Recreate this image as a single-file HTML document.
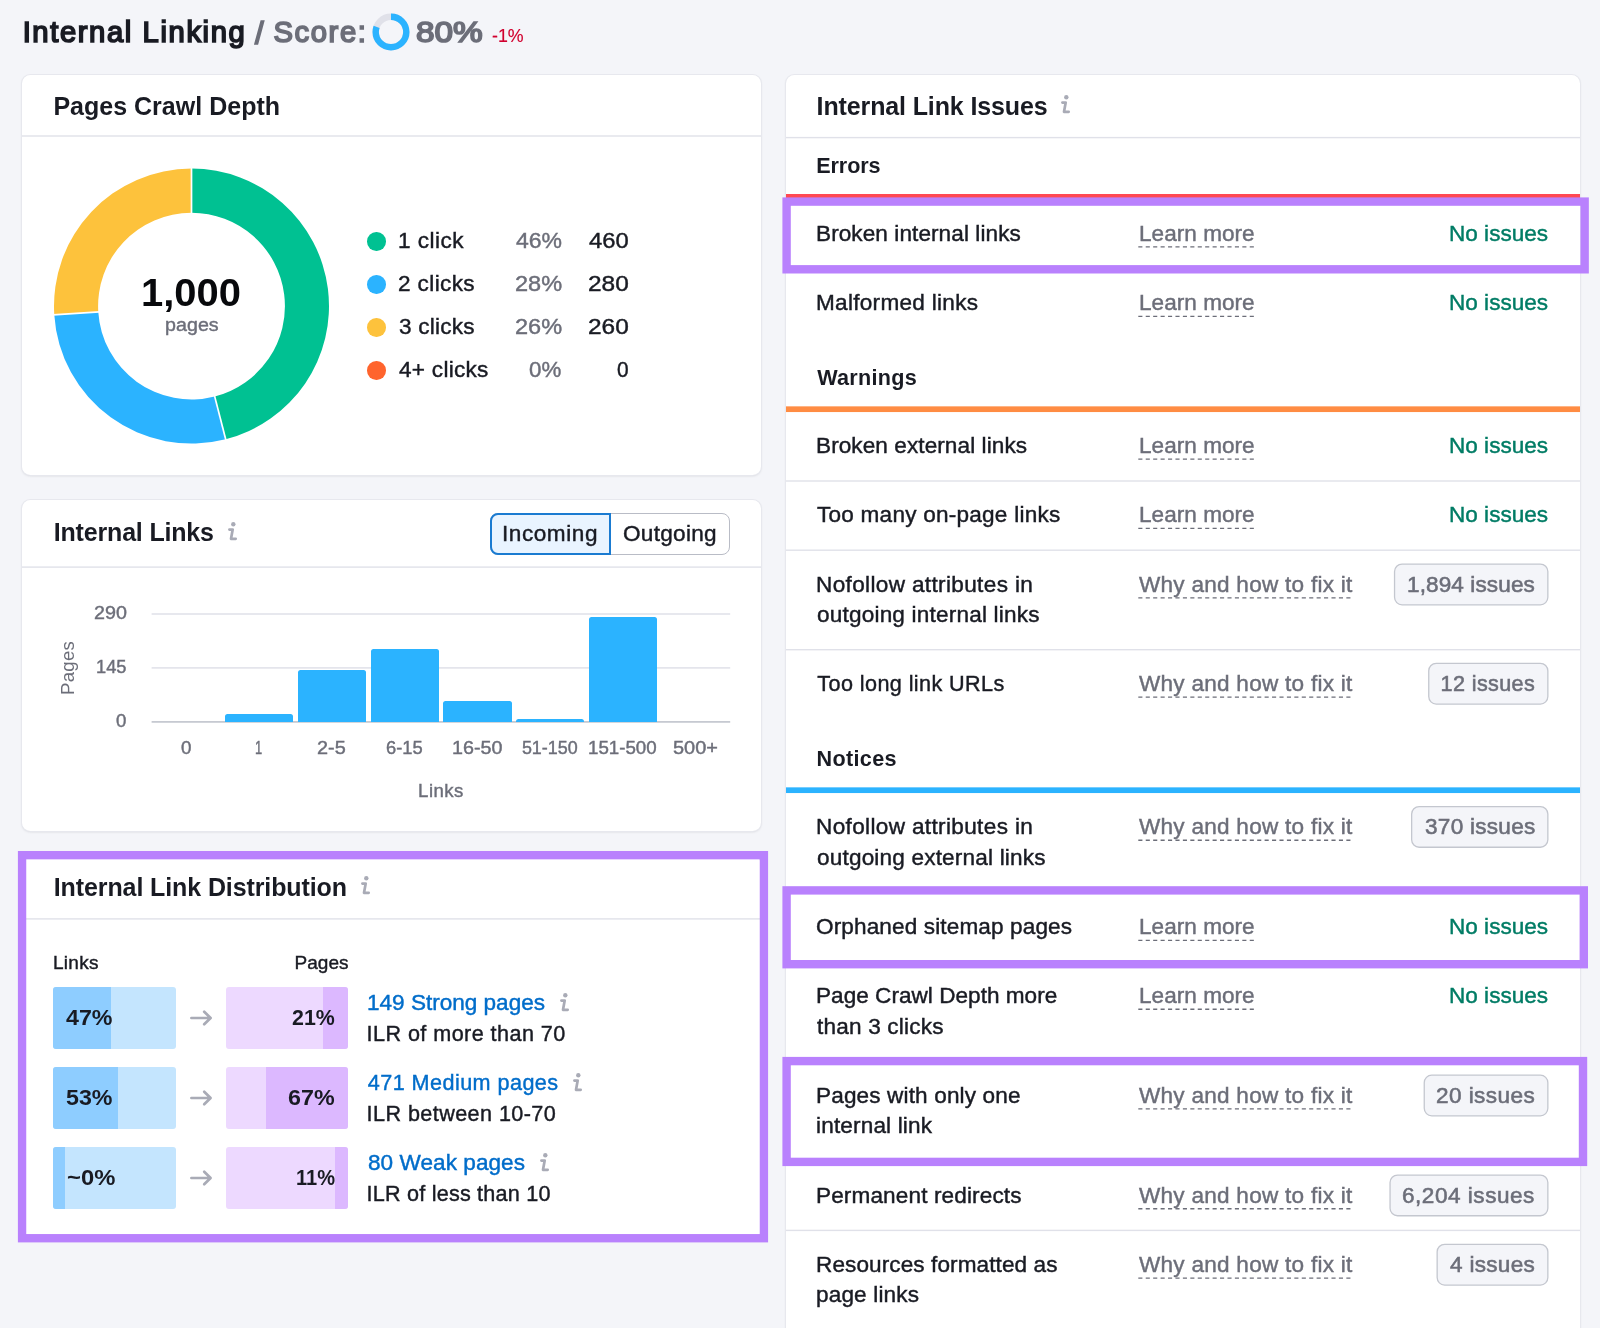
<!DOCTYPE html>
<html lang="en"><head><meta charset="utf-8"><title>Internal Linking</title>
<style>
html,body{margin:0;padding:0;background:#f4f5f9}
body{width:1600px;height:1328px;position:relative}
#page{position:absolute;left:0;top:0;width:1600px;height:1328px;overflow:hidden;background:#f4f5f9;font-family:"Liberation Sans",sans-serif;color:#191b23}
.t{position:absolute;white-space:nowrap;line-height:1;font-weight:400}
.txt{position:absolute;left:0;top:0;width:1600px;height:1328px;will-change:transform}
.r{-webkit-text-stroke:0.42px}
.abs{position:absolute}
.card{position:absolute;background:#fff;border-radius:8.5px;box-shadow:0 0 0 1px #e7e8ee,0 1px 2.5px rgba(25,27,35,.15)}
.bar{position:absolute;background:#2bb3ff;border-radius:2.5px 2.5px 0 0}
.db{position:absolute;height:61.3px;border-radius:3px;overflow:hidden}
.db i{position:absolute;top:0;bottom:0;display:block}
</style></head><body><div id="page">

<div class="card" style="left:22px;top:75px;width:739px;height:400px"></div>
<div class="card" style="left:22px;top:500px;width:739px;height:331px"></div>
<div class="card" style="left:22px;top:856px;width:739px;height:382px"></div>
<div class="card" style="left:786px;top:75px;width:794px;height:1300px"></div>
<svg class="abs" style="left:0;top:0" width="1600" height="1328" viewBox="0 0 1600 1328"><rect x="22" y="135.30" width="739" height="1.4" fill="#e0e1e9"/><rect x="22" y="566.40" width="739" height="1.4" fill="#e0e1e9"/><rect x="26" y="918.20" width="735" height="1.4" fill="#e0e1e9"/><rect x="786" y="136.90" width="794" height="1.4" fill="#e0e1e9"/><rect x="786" y="480.30" width="794" height="1.4" fill="#e0e1e9"/><rect x="786" y="549.50" width="794" height="1.4" fill="#e0e1e9"/><rect x="786" y="649.00" width="794" height="1.4" fill="#e0e1e9"/><rect x="786" y="1229.70" width="794" height="1.4" fill="#e0e1e9"/><rect x="151.6" y="613.25" width="578.6" height="1.5" fill="#e0e1e9"/><rect x="151.6" y="667.15" width="578.6" height="1.5" fill="#e0e1e9"/><rect x="151.6" y="721.05" width="578.6" height="1.7" fill="#c4c7cf"/><rect x="786" y="194.00" width="794" height="5.7" fill="#ff4953"/><rect x="786" y="406.35" width="794" height="5.7" fill="#ff8c43"/><rect x="786" y="787.35" width="794" height="5.7" fill="#2bb3ff"/><rect x="1394.55" y="564.10" width="153.30" height="40.70" rx="7.5" fill="#f4f5f9" stroke="#c4c7cf" stroke-width="1.3"/><rect x="1428.75" y="663.35" width="119.10" height="40.70" rx="7.5" fill="#f4f5f9" stroke="#c4c7cf" stroke-width="1.3"/><rect x="1411.65" y="806.55" width="136.20" height="40.70" rx="7.5" fill="#f4f5f9" stroke="#c4c7cf" stroke-width="1.3"/><rect x="1424.25" y="1075.15" width="123.60" height="40.70" rx="7.5" fill="#f4f5f9" stroke="#c4c7cf" stroke-width="1.3"/><rect x="1390.05" y="1175.05" width="157.80" height="40.70" rx="7.5" fill="#f4f5f9" stroke="#c4c7cf" stroke-width="1.3"/><rect x="1437.15" y="1244.35" width="110.70" height="40.70" rx="7.5" fill="#f4f5f9" stroke="#c4c7cf" stroke-width="1.3"/><path d="M1138.3 246.90H1254.6" stroke="#6c6e79" stroke-width="1.4" stroke-dasharray="4.1 3.33" fill="none"/><path d="M1138.3 316.35H1254.6" stroke="#6c6e79" stroke-width="1.4" stroke-dasharray="4.1 3.33" fill="none"/><path d="M1138.3 459.10H1254.6" stroke="#6c6e79" stroke-width="1.4" stroke-dasharray="4.1 3.33" fill="none"/><path d="M1138.3 528.40H1254.6" stroke="#6c6e79" stroke-width="1.4" stroke-dasharray="4.1 3.33" fill="none"/><path d="M1138.3 597.85H1352.2" stroke="#6c6e79" stroke-width="1.4" stroke-dasharray="4.1 3.33" fill="none"/><path d="M1138.3 697.10H1352.2" stroke="#6c6e79" stroke-width="1.4" stroke-dasharray="4.1 3.33" fill="none"/><path d="M1138.3 840.30H1352.2" stroke="#6c6e79" stroke-width="1.4" stroke-dasharray="4.1 3.33" fill="none"/><path d="M1138.3 940.35H1254.6" stroke="#6c6e79" stroke-width="1.4" stroke-dasharray="4.1 3.33" fill="none"/><path d="M1138.3 1009.30H1254.6" stroke="#6c6e79" stroke-width="1.4" stroke-dasharray="4.1 3.33" fill="none"/><path d="M1138.3 1108.90H1352.2" stroke="#6c6e79" stroke-width="1.4" stroke-dasharray="4.1 3.33" fill="none"/><path d="M1138.3 1208.80H1352.2" stroke="#6c6e79" stroke-width="1.4" stroke-dasharray="4.1 3.33" fill="none"/><path d="M1138.3 1278.10H1352.2" stroke="#6c6e79" stroke-width="1.4" stroke-dasharray="4.1 3.33" fill="none"/></svg>
<svg class="abs" style="left:370.65px;top:12.2px" width="40" height="40" viewBox="0 0 40 40"><circle cx="20" cy="20" r="15.3" fill="none" stroke="#e0e1e9" stroke-width="6.4"/><circle cx="20" cy="20" r="15.3" fill="none" stroke="#2bb3ff" stroke-width="6.4" stroke-dasharray="76.91 96.13" transform="rotate(-90 20 20)"/></svg>
<svg class="abs" style="left:0;top:0" width="400" height="480" viewBox="0 0 400 480"><path d="M191.50 168.60A137.5 137.5 0 0 1 225.69 439.28L214.73 396.57A93.4 93.4 0 0 0 191.50 212.70Z" fill="#00c192"/>
<path d="M225.69 439.28A137.5 137.5 0 0 1 54.27 314.73L98.28 311.96A93.4 93.4 0 0 0 214.73 396.57Z" fill="#2bb3ff"/>
<path d="M54.27 314.73A137.5 137.5 0 0 1 191.50 168.60L191.50 212.70A93.4 93.4 0 0 0 98.28 311.96Z" fill="#fdc23c"/>
<path d="M191.50 213.70L191.50 167.60" stroke="#fff" stroke-width="1.7" fill="none"/>
<path d="M214.48 395.60L225.94 440.25" stroke="#fff" stroke-width="1.7" fill="none"/>
<path d="M99.28 311.90L53.27 314.80" stroke="#fff" stroke-width="1.7" fill="none"/></svg>
<div class="abs" style="left:367.2px;top:232.1px;width:18.6px;height:18.6px;border-radius:50%;background:#00c192"></div>
<div class="abs" style="left:367.2px;top:275.1px;width:18.6px;height:18.6px;border-radius:50%;background:#2bb3ff"></div>
<div class="abs" style="left:367.2px;top:318.1px;width:18.6px;height:18.6px;border-radius:50%;background:#fdc23c"></div>
<div class="abs" style="left:367.2px;top:361.1px;width:18.6px;height:18.6px;border-radius:50%;background:#ff642d"></div>
<svg class="abs" style="left:227.2px;top:520.8px" width="12" height="21" viewBox="-1 -1 12 21"><circle cx="5.3" cy="2.3" r="2.2" fill="#a9abb6"/><path d="M1.4 7.6H4.7L3 16.8H7.7" fill="none" stroke="#a9abb6" stroke-width="2.7" stroke-linejoin="round" stroke-linecap="round"/></svg>
<svg class="abs" style="left:359.6px;top:875.2px" width="12" height="21" viewBox="-1 -1 12 21"><circle cx="5.3" cy="2.3" r="2.2" fill="#a9abb6"/><path d="M1.4 7.6H4.7L3 16.8H7.7" fill="none" stroke="#a9abb6" stroke-width="2.7" stroke-linejoin="round" stroke-linecap="round"/></svg>
<svg class="abs" style="left:1060.3px;top:93.6px" width="12" height="21" viewBox="-1 -1 12 21"><circle cx="5.3" cy="2.3" r="2.2" fill="#a9abb6"/><path d="M1.4 7.6H4.7L3 16.8H7.7" fill="none" stroke="#a9abb6" stroke-width="2.7" stroke-linejoin="round" stroke-linecap="round"/></svg>
<svg class="abs" style="left:558.5px;top:992.4px" width="12" height="21" viewBox="-1 -1 12 21"><circle cx="5.3" cy="2.3" r="2.2" fill="#a9abb6"/><path d="M1.4 7.6H4.7L3 16.8H7.7" fill="none" stroke="#a9abb6" stroke-width="2.7" stroke-linejoin="round" stroke-linecap="round"/></svg>
<svg class="abs" style="left:572.2px;top:1072.2px" width="12" height="21" viewBox="-1 -1 12 21"><circle cx="5.3" cy="2.3" r="2.2" fill="#a9abb6"/><path d="M1.4 7.6H4.7L3 16.8H7.7" fill="none" stroke="#a9abb6" stroke-width="2.7" stroke-linejoin="round" stroke-linecap="round"/></svg>
<svg class="abs" style="left:538.5px;top:1152.2px" width="12" height="21" viewBox="-1 -1 12 21"><circle cx="5.3" cy="2.3" r="2.2" fill="#a9abb6"/><path d="M1.4 7.6H4.7L3 16.8H7.7" fill="none" stroke="#a9abb6" stroke-width="2.7" stroke-linejoin="round" stroke-linecap="round"/></svg>
<div class="abs" style="left:490px;top:513px;width:240px;height:42px;box-sizing:border-box;border:1px solid #b9bcc6;border-radius:8px;background:#fff"></div>
<div class="abs" style="left:490px;top:513px;width:121px;height:42px;box-sizing:border-box;border:2px solid #1a7bd1;border-radius:8px 0 0 8px;background:#e9f4ff"></div>
<div class="bar" style="left:225px;width:68.00px;top:713.75px;height:7.85px"></div>
<div class="bar" style="left:297.5px;width:68.25px;top:669.5px;height:52.10px"></div>
<div class="bar" style="left:370.5px;width:68.70px;top:649.25px;height:72.35px"></div>
<div class="bar" style="left:442.8px;width:68.80px;top:701.2px;height:20.40px"></div>
<div class="bar" style="left:516.4px;width:67.60px;top:719px;height:2.60px"></div>
<div class="bar" style="left:588.8px;width:68.40px;top:616.8px;height:104.80px"></div>
<div class="db" style="left:53.2px;top:987.4px;width:122.8px;background:#c4e5fe"><i style="left:0;width:57.5px;background:#8ecdff"></i></div>
<div class="db" style="left:225.6px;top:987.4px;width:122.7px;background:#edd9ff"><i style="right:0;width:25.7px;background:#dcb8ff"></i></div>
<svg class="abs" style="left:189px;top:1009.0px" width="24" height="18" viewBox="0 0 24 18"><path d="M2.4 9H20.6M15.2 2.7L21.6 9L15.2 15.3" fill="none" stroke="#a9abb6" stroke-width="2.7" stroke-linecap="round" stroke-linejoin="round"/></svg>
<div class="db" style="left:53.2px;top:1067.4px;width:122.8px;background:#c4e5fe"><i style="left:0;width:65.3px;background:#8ecdff"></i></div>
<div class="db" style="left:225.6px;top:1067.4px;width:122.7px;background:#edd9ff"><i style="right:0;width:82.3px;background:#dcb8ff"></i></div>
<svg class="abs" style="left:189px;top:1089.0px" width="24" height="18" viewBox="0 0 24 18"><path d="M2.4 9H20.6M15.2 2.7L21.6 9L15.2 15.3" fill="none" stroke="#a9abb6" stroke-width="2.7" stroke-linecap="round" stroke-linejoin="round"/></svg>
<div class="db" style="left:53.2px;top:1147.4px;width:122.8px;background:#c4e5fe"><i style="left:0;width:12.2px;background:#8ecdff"></i></div>
<div class="db" style="left:225.6px;top:1147.4px;width:122.7px;background:#edd9ff"><i style="right:0;width:13.5px;background:#dcb8ff"></i></div>
<svg class="abs" style="left:189px;top:1169.0px" width="24" height="18" viewBox="0 0 24 18"><path d="M2.4 9H20.6M15.2 2.7L21.6 9L15.2 15.3" fill="none" stroke="#a9abb6" stroke-width="2.7" stroke-linecap="round" stroke-linejoin="round"/></svg>
<div class="txt">
<div class="t" style="left:59px;top:694.80px;font-size:18.6px;letter-spacing:0.294px;color:#6c6e79;transform-origin:0 0;transform:rotate(-90deg)">Pages</div>
<div class="t" style="left:22.65px;top:18px;font-size:29.2px;letter-spacing:1.612px;font-weight:401;-webkit-text-stroke:1.7px;">Internal Linking</div>
<div class="t" style="left:254.65px;top:18px;font-size:31.8px;font-weight:401;color:#6c6e79;-webkit-text-stroke:1.7px;transform:scaleX(0.98);transform-origin:0 0;">/</div>
<div class="t" style="left:273.45px;top:18px;font-size:29.2px;letter-spacing:1.631px;font-weight:401;color:#6c6e79;-webkit-text-stroke:1.7px;">Score:</div>
<div class="t" style="left:415.96px;top:18px;font-size:29.2px;font-weight:401;color:#6c6e79;-webkit-text-stroke:1.7px;transform:scaleX(1.1414);transform-origin:0 0;">80%</div>
<div class="t r" style="left:492.10px;top:27px;font-size:18.6px;color:#d1002f;-webkit-text-stroke:0.15px;transform:scaleX(0.9560);transform-origin:0 0;">-1%</div>
<div class="t" style="left:53.40px;top:94px;font-size:25px;letter-spacing:0.011px;font-weight:700;">Pages Crawl Depth</div>
<div class="t" style="left:141.03px;top:274px;font-size:38.5px;font-weight:700;color:#08090c;transform:scaleX(1.0373);transform-origin:0 0;">1,000</div>
<div class="t r" style="left:164.56px;top:316px;font-size:18.8px;letter-spacing:0.043px;color:#6c6e79;transform:scaleX(1.0450);transform-origin:0 0;">pages</div>
<div class="t r" style="left:398.35px;top:230px;font-size:21.6px;letter-spacing:0.437px;transform:scaleX(1.0450);transform-origin:0 0;">1 click</div>
<div class="t r" style="left:515.60px;top:230px;font-size:21.6px;color:#6c6e79;transform:scaleX(1.0647);transform-origin:0 0;">46%</div>
<div class="t r" style="left:589.40px;top:230px;font-size:21.6px;transform:scaleX(1.0994);transform-origin:0 0;">460</div>
<div class="t r" style="left:398.35px;top:273px;font-size:21.6px;letter-spacing:0.363px;transform:scaleX(1.0450);transform-origin:0 0;">2 clicks</div>
<div class="t r" style="left:514.51px;top:273px;font-size:21.6px;color:#6c6e79;transform:scaleX(1.0900);transform-origin:0 0;">28%</div>
<div class="t r" style="left:588.27px;top:273px;font-size:21.6px;transform:scaleX(1.1308);transform-origin:0 0;">280</div>
<div class="t r" style="left:399.40px;top:316px;font-size:21.6px;letter-spacing:0.220px;transform:scaleX(1.0450);transform-origin:0 0;">3 clicks</div>
<div class="t r" style="left:514.51px;top:316px;font-size:21.6px;color:#6c6e79;transform:scaleX(1.0900);transform-origin:0 0;">26%</div>
<div class="t r" style="left:588.27px;top:316px;font-size:21.6px;transform:scaleX(1.1308);transform-origin:0 0;">260</div>
<div class="t r" style="left:399.40px;top:359px;font-size:21.6px;letter-spacing:0.267px;transform:scaleX(1.0450);transform-origin:0 0;">4+ clicks</div>
<div class="t r" style="left:529.40px;top:359px;font-size:21.6px;color:#6c6e79;transform:scaleX(1.0319);transform-origin:0 0;">0%</div>
<div class="t r" style="left:617.40px;top:359px;font-size:21.6px;transform:scaleX(0.9667);transform-origin:0 0;">0</div>
<div class="t" style="left:53.75px;top:520px;font-size:25px;letter-spacing:-0.176px;font-weight:700;">Internal Links</div>
<div class="t r" style="left:501.91px;top:523px;font-size:21.6px;letter-spacing:0.531px;transform:scaleX(1.0450);transform-origin:0 0;">Incoming</div>
<div class="t r" style="left:623.06px;top:523px;font-size:21.6px;letter-spacing:0.276px;transform:scaleX(1.0450);transform-origin:0 0;">Outgoing</div>
<div class="t r" style="left:93.50px;top:605px;font-size:17.9px;color:#6c6e79;transform:scaleX(1.1003);transform-origin:0 0;">290</div>
<div class="t r" style="left:95.73px;top:659px;font-size:17.9px;color:#6c6e79;transform:scaleX(1.0190);transform-origin:0 0;">145</div>
<div class="t r" style="left:115.80px;top:713px;font-size:17.9px;color:#6c6e79;transform:scaleX(1.0400);transform-origin:0 0;">0</div>
<div class="t r" style="left:181.00px;top:740px;font-size:17.9px;color:#6c6e79;transform:scaleX(1.0500);transform-origin:0 0;">0</div>
<div class="t r" style="left:255.28px;top:740px;font-size:17.9px;color:#6c6e79;transform:scaleX(0.7222);transform-origin:0 0;">1</div>
<div class="t r" style="left:317.38px;top:740px;font-size:17.9px;color:#6c6e79;transform:scaleX(1.1097);transform-origin:0 0;">2-5</div>
<div class="t r" style="left:385.88px;top:740px;font-size:17.9px;color:#6c6e79;transform:scaleX(1.0249);transform-origin:0 0;">6-15</div>
<div class="t r" style="left:451.60px;top:740px;font-size:17.9px;color:#6c6e79;transform:scaleX(1.1025);transform-origin:0 0;">16-50</div>
<div class="t r" style="left:521.90px;top:740px;font-size:17.9px;color:#6c6e79;">51-150</div>
<div class="t r" style="left:587.80px;top:740px;font-size:17.9px;color:#6c6e79;transform:scaleX(1.0462);transform-origin:0 0;">151-500</div>
<div class="t r" style="left:673.20px;top:740px;font-size:17.9px;color:#6c6e79;transform:scaleX(1.1142);transform-origin:0 0;">500+</div>
<div class="t r" style="left:418.10px;top:782px;font-size:18.6px;letter-spacing:0.473px;color:#6c6e79;">Links</div>
<div class="t" style="left:53.75px;top:875px;font-size:25px;letter-spacing:-0.103px;font-weight:700;">Internal Link Distribution</div>
<div class="t r" style="left:53.00px;top:953px;font-size:19px;letter-spacing:0.286px;">Links</div>
<div class="t r" style="left:294.60px;top:953px;font-size:19px;letter-spacing:0.007px;">Pages</div>
<div class="t" style="left:66.30px;top:1007px;font-size:21.6px;font-weight:700;transform:scaleX(1.0763);transform-origin:0 0;">47%</div>
<div class="t" style="left:66.30px;top:1087px;font-size:21.6px;font-weight:700;transform:scaleX(1.0763);transform-origin:0 0;">53%</div>
<div class="t" style="left:66.90px;top:1167px;font-size:21.6px;font-weight:700;transform:scaleX(1.1027);transform-origin:0 0;">~0%</div>
<div class="t" style="left:292.00px;top:1007px;font-size:21.6px;font-weight:700;transform:scaleX(0.9903);transform-origin:0 0;">21%</div>
<div class="t" style="left:288.20px;top:1087px;font-size:21.6px;font-weight:700;transform:scaleX(1.0786);transform-origin:0 0;">67%</div>
<div class="t" style="left:295.77px;top:1167px;font-size:21.6px;font-weight:700;transform:scaleX(0.9283);transform-origin:0 0;">11%</div>
<div class="t r" style="left:366.75px;top:992px;font-size:21.6px;letter-spacing:-0.008px;color:#006dca;transform:scaleX(1.0450);transform-origin:0 0;">149 Strong pages</div>
<div class="t r" style="left:366.60px;top:1023px;font-size:21.6px;letter-spacing:0.431px;">ILR of more than 70</div>
<div class="t r" style="left:367.80px;top:1072px;font-size:21.6px;letter-spacing:0.442px;color:#006dca;">471 Medium pages</div>
<div class="t r" style="left:366.60px;top:1103px;font-size:21.6px;letter-spacing:0.421px;">ILR between 10-70</div>
<div class="t r" style="left:367.80px;top:1152px;font-size:21.6px;letter-spacing:0.047px;color:#006dca;transform:scaleX(1.0450);transform-origin:0 0;">80 Weak pages</div>
<div class="t r" style="left:366.60px;top:1183px;font-size:21.6px;letter-spacing:0.208px;">ILR of less than 10</div>
<div class="t" style="left:816.60px;top:94px;font-size:25px;letter-spacing:-0.124px;font-weight:700;">Internal Link Issues</div>
<div class="t" style="left:816.25px;top:155px;font-size:21.6px;letter-spacing:-0.111px;font-weight:700;">Errors</div>
<div class="t" style="left:817.20px;top:367px;font-size:21.6px;letter-spacing:0.291px;font-weight:700;">Warnings</div>
<div class="t" style="left:816.50px;top:748px;font-size:21.6px;letter-spacing:0.334px;font-weight:700;">Notices</div>
<div class="t r" style="left:816.25px;top:223px;font-size:21.6px;letter-spacing:0.076px;transform:scaleX(1.0450);transform-origin:0 0;">Broken internal links</div>
<div class="t r" style="left:1138.65px;top:223px;font-size:21.6px;letter-spacing:0.028px;color:#6c6e79;transform:scaleX(1.0450);transform-origin:0 0;">Learn more</div>
<div class="t r" style="left:1448.95px;top:223px;font-size:21.6px;color:#007c65;transform:scaleX(1.0450);transform-origin:0 0;">No issues</div>
<div class="t r" style="left:816.25px;top:292px;font-size:21.6px;letter-spacing:0.275px;transform:scaleX(1.0450);transform-origin:0 0;">Malformed links</div>
<div class="t r" style="left:1138.65px;top:292px;font-size:21.6px;letter-spacing:0.028px;color:#6c6e79;transform:scaleX(1.0450);transform-origin:0 0;">Learn more</div>
<div class="t r" style="left:1448.95px;top:292px;font-size:21.6px;color:#007c65;transform:scaleX(1.0450);transform-origin:0 0;">No issues</div>
<div class="t r" style="left:816.25px;top:435px;font-size:21.6px;letter-spacing:0.075px;transform:scaleX(1.0450);transform-origin:0 0;">Broken external links</div>
<div class="t r" style="left:1138.65px;top:435px;font-size:21.6px;letter-spacing:0.028px;color:#6c6e79;transform:scaleX(1.0450);transform-origin:0 0;">Learn more</div>
<div class="t r" style="left:1448.95px;top:435px;font-size:21.6px;color:#007c65;transform:scaleX(1.0450);transform-origin:0 0;">No issues</div>
<div class="t r" style="left:817.30px;top:504px;font-size:21.6px;letter-spacing:0.224px;transform:scaleX(1.0450);transform-origin:0 0;">Too many on-page links</div>
<div class="t r" style="left:1138.65px;top:504px;font-size:21.6px;letter-spacing:0.028px;color:#6c6e79;transform:scaleX(1.0450);transform-origin:0 0;">Learn more</div>
<div class="t r" style="left:1448.95px;top:504px;font-size:21.6px;color:#007c65;transform:scaleX(1.0450);transform-origin:0 0;">No issues</div>
<div class="t r" style="left:816.25px;top:574px;font-size:21.6px;letter-spacing:0.335px;transform:scaleX(1.0450);transform-origin:0 0;">Nofollow attributes in</div>
<div class="t r" style="left:817.30px;top:604px;font-size:21.6px;letter-spacing:0.183px;transform:scaleX(1.0450);transform-origin:0 0;">outgoing internal links</div>
<div class="t r" style="left:1138.60px;top:574px;font-size:21.6px;letter-spacing:0.244px;color:#6c6e79;transform:scaleX(1.0450);transform-origin:0 0;">Why and how to fix it</div>
<div class="t r" style="left:1406.95px;top:574px;font-size:21.6px;letter-spacing:0.099px;color:#6c6e79;-webkit-text-stroke:0.55px;transform:scaleX(1.0450);transform-origin:0 0;">1,894 issues</div>
<div class="t r" style="left:817.30px;top:673px;font-size:21.6px;letter-spacing:0.410px;">Too long link URLs</div>
<div class="t r" style="left:1138.60px;top:673px;font-size:21.6px;letter-spacing:0.244px;color:#6c6e79;transform:scaleX(1.0450);transform-origin:0 0;">Why and how to fix it</div>
<div class="t r" style="left:1440.60px;top:673px;font-size:21.6px;letter-spacing:0.371px;color:#6c6e79;-webkit-text-stroke:0.55px;">12 issues</div>
<div class="t r" style="left:816.25px;top:816px;font-size:21.6px;letter-spacing:0.335px;transform:scaleX(1.0450);transform-origin:0 0;">Nofollow attributes in</div>
<div class="t r" style="left:817.30px;top:847px;font-size:21.6px;letter-spacing:0.172px;transform:scaleX(1.0450);transform-origin:0 0;">outgoing external links</div>
<div class="t r" style="left:1138.60px;top:816px;font-size:21.6px;letter-spacing:0.244px;color:#6c6e79;transform:scaleX(1.0450);transform-origin:0 0;">Why and how to fix it</div>
<div class="t r" style="left:1424.50px;top:816px;font-size:21.6px;letter-spacing:0.256px;color:#6c6e79;-webkit-text-stroke:0.55px;transform:scaleX(1.0450);transform-origin:0 0;">370 issues</div>
<div class="t r" style="left:816.25px;top:916px;font-size:21.6px;letter-spacing:0.120px;transform:scaleX(1.0450);transform-origin:0 0;">Orphaned sitemap pages</div>
<div class="t r" style="left:1138.65px;top:916px;font-size:21.6px;letter-spacing:0.028px;color:#6c6e79;transform:scaleX(1.0450);transform-origin:0 0;">Learn more</div>
<div class="t r" style="left:1448.95px;top:916px;font-size:21.6px;color:#007c65;transform:scaleX(1.0450);transform-origin:0 0;">No issues</div>
<div class="t r" style="left:816.25px;top:985px;font-size:21.6px;letter-spacing:0.022px;transform:scaleX(1.0450);transform-origin:0 0;">Page Crawl Depth more</div>
<div class="t r" style="left:817.30px;top:1016px;font-size:21.6px;letter-spacing:0.185px;transform:scaleX(1.0450);transform-origin:0 0;">than 3 clicks</div>
<div class="t r" style="left:1138.65px;top:985px;font-size:21.6px;letter-spacing:0.028px;color:#6c6e79;transform:scaleX(1.0450);transform-origin:0 0;">Learn more</div>
<div class="t r" style="left:1448.95px;top:985px;font-size:21.6px;color:#007c65;transform:scaleX(1.0450);transform-origin:0 0;">No issues</div>
<div class="t r" style="left:816.25px;top:1085px;font-size:21.6px;letter-spacing:0.135px;transform:scaleX(1.0450);transform-origin:0 0;">Pages with only one</div>
<div class="t r" style="left:816.25px;top:1115px;font-size:21.6px;letter-spacing:0.151px;transform:scaleX(1.0450);transform-origin:0 0;">internal link</div>
<div class="t r" style="left:1138.60px;top:1085px;font-size:21.6px;letter-spacing:0.244px;color:#6c6e79;transform:scaleX(1.0450);transform-origin:0 0;">Why and how to fix it</div>
<div class="t r" style="left:1436.05px;top:1085px;font-size:21.6px;letter-spacing:0.407px;color:#6c6e79;-webkit-text-stroke:0.55px;transform:scaleX(1.0450);transform-origin:0 0;">20 issues</div>
<div class="t r" style="left:816.25px;top:1185px;font-size:21.6px;letter-spacing:0.125px;transform:scaleX(1.0450);transform-origin:0 0;">Permanent redirects</div>
<div class="t r" style="left:1138.60px;top:1185px;font-size:21.6px;letter-spacing:0.244px;color:#6c6e79;transform:scaleX(1.0450);transform-origin:0 0;">Why and how to fix it</div>
<div class="t r" style="left:1402.45px;top:1185px;font-size:21.6px;letter-spacing:0.490px;color:#6c6e79;-webkit-text-stroke:0.55px;transform:scaleX(1.0450);transform-origin:0 0;">6,204 issues</div>
<div class="t r" style="left:816.25px;top:1254px;font-size:21.6px;letter-spacing:0.090px;transform:scaleX(1.0450);transform-origin:0 0;">Resources formatted as</div>
<div class="t r" style="left:816.25px;top:1284px;font-size:21.6px;letter-spacing:0.151px;transform:scaleX(1.0450);transform-origin:0 0;">page links</div>
<div class="t r" style="left:1138.60px;top:1254px;font-size:21.6px;letter-spacing:0.244px;color:#6c6e79;transform:scaleX(1.0450);transform-origin:0 0;">Why and how to fix it</div>
<div class="t r" style="left:1450.00px;top:1254px;font-size:21.6px;letter-spacing:0.274px;color:#6c6e79;-webkit-text-stroke:0.55px;transform:scaleX(1.0450);transform-origin:0 0;">4 issues</div>
</div>
<svg class="abs" style="left:0;top:0" width="1600" height="1328" viewBox="0 0 1600 1328"><rect x="22.07" y="855.17" width="741.85" height="383.05" fill="none" stroke="#b981fd" stroke-width="8.35"/><rect x="786.60" y="201.60" width="798.05" height="67.70" fill="none" stroke="#b981fd" stroke-width="8.4"/><rect x="786.60" y="890.40" width="797.20" height="73.80" fill="none" stroke="#b981fd" stroke-width="8.4"/><rect x="786.60" y="1061.10" width="796.40" height="100.80" fill="none" stroke="#b981fd" stroke-width="8.4"/></svg>
</div></body></html>
